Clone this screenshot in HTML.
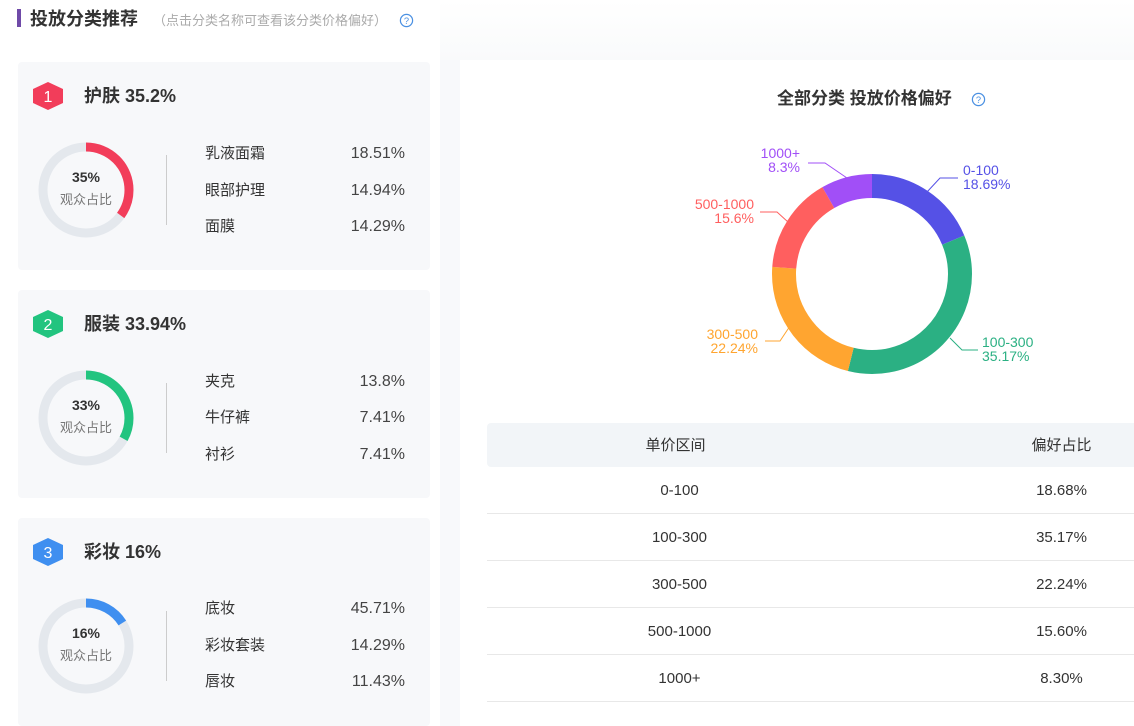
<!DOCTYPE html>
<html><head><meta charset="utf-8"><style>
*{margin:0;padding:0;box-sizing:border-box}
body{width:1134px;height:726px;background:#fff;font-family:"Liberation Sans","Noto Sans CJK SC",sans-serif;position:relative;overflow:hidden;color:#333}
.abs{position:absolute}
.card{position:absolute;left:18px;width:412px;height:208px;background:#f7f8fa;border-radius:4px}
.hex{position:absolute;left:15px;top:20px;width:30px;height:28px}
.ct{position:absolute;left:66px;top:22px;font-size:18px;line-height:24px;font-weight:bold;color:#333}
.ring{position:absolute;left:20px;top:80px}
.pc{position:absolute;left:20px;width:96px;text-align:center;top:106px;font-size:14px;line-height:18px;font-weight:bold;color:#333}
.lb{position:absolute;left:20px;width:96px;text-align:center;top:129px;font-size:13px;line-height:18px;color:#777}
.vl{position:absolute;left:148px;top:93px;width:1px;height:70px;background:#ccc}
.it{position:absolute;left:187px;width:200px;font-size:15px;line-height:20px;height:20px;color:#333}
.it span{position:absolute;right:0;top:0;font-size:16px;color:#444}
.tr{position:absolute;left:487px;width:647px;height:47px;border-bottom:1px solid #e8e8e8;font-size:15px;line-height:18px;color:#333}
.tr div{position:absolute;top:15px}
.tr .a{left:130px;width:125px;text-align:center}
.tr .b{left:512px;width:125px;text-align:center}
</style></head><body>
<div class="abs" style="left:17px;top:9px;width:4px;height:18px;background:#6f4aa8"></div>
<div class="abs" style="left:30px;top:7px;font-size:18px;line-height:24px;font-weight:bold;color:#333">投放分类推荐</div>
<div class="abs" style="left:153px;top:12px;font-size:13px;line-height:18px;color:#aaa">（点击分类名称可查看该分类价格偏好）</div>
<svg class="abs" style="left:399px;top:13px" width="15" height="15" viewBox="0 0 16 16"><circle cx="8" cy="8" r="6.5" fill="none" stroke="#4a90e2" stroke-width="1.3"/><text x="8" y="11.5" font-size="10" text-anchor="middle" fill="#4a90e2" font-family="Liberation Sans">?</text></svg>

<div class="abs" style="left:440px;top:0;width:694px;height:60px;background:linear-gradient(#fff,#f9fafb)"></div>
<div class="abs" style="left:440px;top:60px;width:20px;height:666px;background:#f8f9fb"></div>

<div class="card" style="top:62px">
<svg class="hex" viewBox="0 0 30 28"><polygon points="15,0 30,7 30,21 15,28 0,21 0,7" fill="#f23d5a"/><text x="15" y="20" font-size="16" text-anchor="middle" fill="#fff" font-family="Liberation Sans">1</text></svg>
<div class="ct">护肤 35.2%</div>
<svg class="ring" width="96" height="96" viewBox="0 0 96 96"><circle cx="48" cy="48" r="43" fill="none" stroke="#e4e8ed" stroke-width="9"/><circle cx="48" cy="48" r="43" fill="none" stroke="#f23d5a" stroke-width="9" stroke-dasharray="94.6 300" transform="rotate(-90 48 48)"/></svg>
<div class="pc">35%</div><div class="lb">观众占比</div><div class="vl"></div>
<div class="it" style="top:82px">乳液面霜<span>18.51%</span></div>
<div class="it" style="top:119px">眼部护理<span>14.94%</span></div>
<div class="it" style="top:155px">面膜<span>14.29%</span></div>
</div>
<div class="card" style="top:290px">
<svg class="hex" viewBox="0 0 30 28"><polygon points="15,0 30,7 30,21 15,28 0,21 0,7" fill="#22c47f"/><text x="15" y="20" font-size="16" text-anchor="middle" fill="#fff" font-family="Liberation Sans">2</text></svg>
<div class="ct">服装 33.94%</div>
<svg class="ring" width="96" height="96" viewBox="0 0 96 96"><circle cx="48" cy="48" r="43" fill="none" stroke="#e4e8ed" stroke-width="9"/><circle cx="48" cy="48" r="43" fill="none" stroke="#22c47f" stroke-width="9" stroke-dasharray="89.2 300" transform="rotate(-90 48 48)"/></svg>
<div class="pc">33%</div><div class="lb">观众占比</div><div class="vl"></div>
<div class="it" style="top:82px">夹克<span>13.8%</span></div>
<div class="it" style="top:118px">牛仔裤<span>7.41%</span></div>
<div class="it" style="top:155px">衬衫<span>7.41%</span></div>
</div>
<div class="card" style="top:518px">
<svg class="hex" viewBox="0 0 30 28"><polygon points="15,0 30,7 30,21 15,28 0,21 0,7" fill="#3f8ff0"/><text x="15" y="20" font-size="16" text-anchor="middle" fill="#fff" font-family="Liberation Sans">3</text></svg>
<div class="ct">彩妆 16%</div>
<svg class="ring" width="96" height="96" viewBox="0 0 96 96"><circle cx="48" cy="48" r="43" fill="none" stroke="#e4e8ed" stroke-width="9"/><circle cx="48" cy="48" r="43" fill="none" stroke="#3f8ff0" stroke-width="9" stroke-dasharray="43.2 300" transform="rotate(-90 48 48)"/></svg>
<div class="pc">16%</div><div class="lb">观众占比</div><div class="vl"></div>
<div class="it" style="top:81px">底妆<span>45.71%</span></div>
<div class="it" style="top:118px">彩妆套装<span>14.29%</span></div>
<div class="it" style="top:154px">唇妆<span>11.43%</span></div>
</div>

<div class="abs" style="left:777px;top:88px;font-size:17px;line-height:22px;font-weight:bold;color:#333">全部分类 投放价格偏好</div>
<svg class="abs" style="left:971px;top:92px" width="15" height="15" viewBox="0 0 16 16"><circle cx="8" cy="8" r="6.5" fill="none" stroke="#4a90e2" stroke-width="1.3"/><text x="8" y="11.5" font-size="10" text-anchor="middle" fill="#4a90e2" font-family="Liberation Sans">?</text></svg>

<svg class="abs" style="left:0;top:0" width="1134" height="726">
<g transform="rotate(-90 872 274)" fill="none" stroke-width="24">
<circle cx="872" cy="274" r="88" stroke="#5551e6" stroke-dasharray="103.34 552.92"/>
<circle cx="872" cy="274" r="88" stroke="#2bb083" stroke-dasharray="0 103.34 194.46 552.92"/>
<circle cx="872" cy="274" r="88" stroke="#ffa530" stroke-dasharray="0 297.8 122.97 552.92"/>
<circle cx="872" cy="274" r="88" stroke="#ff5f5f" stroke-dasharray="0 420.77 86.26 552.92"/>
<circle cx="872" cy="274" r="88" stroke="#a14ff7" stroke-dasharray="0 507.03 45.89 552.92"/>
</g>
<g fill="none" stroke-width="1">
<polyline points="927,192 940,178 958,178" stroke="#5551e6"/>
<polyline points="950,338 962,350 978,350" stroke="#2bb083"/>
<polyline points="790,326 780,341 765,341" stroke="#ffa530"/>
<polyline points="788,222 777,212 760,212" stroke="#ff5f5f"/>
<polyline points="847,178 825,163 808,163" stroke="#a14ff7"/>
</g>
<g font-size="14" font-family="Liberation Sans">
<text x="963" y="175" fill="#5551e6">0-100</text><text x="963" y="189" fill="#5551e6">18.69%</text>
<text x="982" y="347" fill="#2bb083">100-300</text><text x="982" y="361" fill="#2bb083">35.17%</text>
<text x="758" y="339" fill="#ffa530" text-anchor="end">300-500</text><text x="758" y="353" fill="#ffa530" text-anchor="end">22.24%</text>
<text x="754" y="209" fill="#ff5f5f" text-anchor="end">500-1000</text><text x="754" y="223" fill="#ff5f5f" text-anchor="end">15.6%</text>
<text x="800" y="158" fill="#a14ff7" text-anchor="end">1000+</text><text x="800" y="172" fill="#a14ff7" text-anchor="end">8.3%</text>
</g>
</svg>

<div class="tr" style="top:423px;height:44px;background:#f2f5f8;border:none;border-radius:4px 0 0 4px"><div class="a" style="top:14px;left:126px">单价区间</div><div class="b" style="top:14px">偏好占比</div></div>
<div class="tr" style="top:467px"><div class="a">0-100</div><div class="b">18.68%</div></div>
<div class="tr" style="top:514px"><div class="a">100-300</div><div class="b">35.17%</div></div>
<div class="tr" style="top:561px"><div class="a">300-500</div><div class="b">22.24%</div></div>
<div class="tr" style="top:608px"><div class="a">500-1000</div><div class="b">15.60%</div></div>
<div class="tr" style="top:655px"><div class="a">1000+</div><div class="b">8.30%</div></div>
</body></html>
